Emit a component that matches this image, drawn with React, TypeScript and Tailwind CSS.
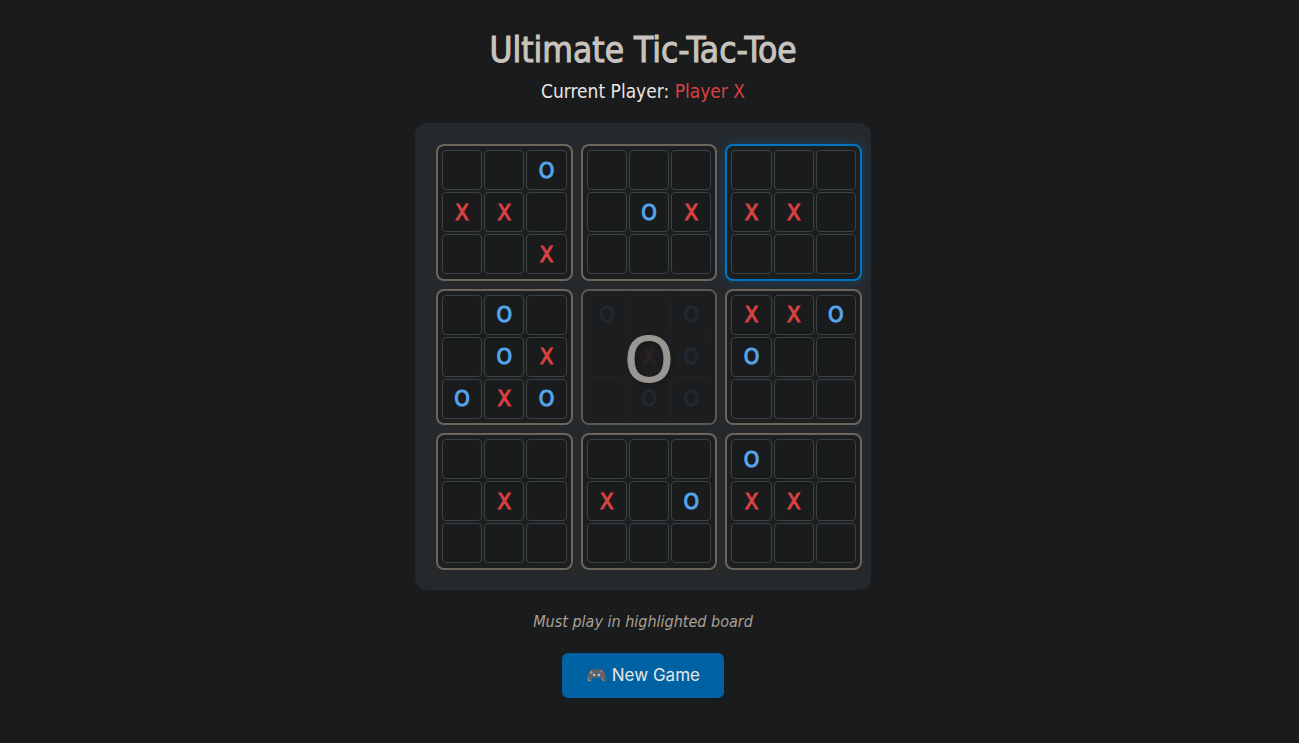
type Mark = "X" | "O" | " ";

interface Board {
  cells: string;
  winner?: Mark;
  active?: boolean;
}

const boards: Board[] = [
  { cells: "  OXX   X" },
  { cells: "    OX   " },
  { cells: "   XX    ", active: true },
  { cells: " O  OXOXO" },
  { cells: "O O XO OO", winner: "O" },
  { cells: "XXOO     " },
  { cells: "    X    " },
  { cells: "   X O   " },
  { cells: "O  XX    " },
];

const Cell = ({ mark, label }: { mark: string; label: string }) => (
  <button
    type="button"
    aria-label={label}
    className={`flex h-10 items-center justify-center rounded border border-[#3c4144] bg-[#1a1b1c] pt-px text-[22px] leading-6 [-webkit-text-stroke:1px_currentColor] ${
      mark === "X" ? "text-[#d94141]" : "text-[#54a6ec]"
    }`}
  >
    {mark.trim()}
  </button>
);

const SmallBoard = ({ board, index }: { board: Board; index: number }) => (
  <div
    className={`relative grid aspect-square grid-cols-3 content-start gap-0.5 rounded-lg border-2 bg-[#1b1f20] p-1 ${
      board.active
        ? "border-[#0074c4] shadow-[0_0_15px_rgba(0,116,196,0.3)]"
        : "border-[#6d655a]"
    } ${board.winner ? "opacity-80" : ""}`}
  >
    {board.cells.split("").map((mark, i) => (
      <Cell key={i} mark={mark} label={`Board ${index + 1}, cell ${i + 1} ${mark}`} />
    ))}
    {/* winner overlay */}
    {board.winner && (
      <div className="absolute inset-0 flex items-center justify-center rounded-md bg-[#1b1c1c]/90 pt-px font-['Noto_Sans',sans-serif] text-[64px] leading-none text-[#b8b3ac] [-webkit-text-stroke:1px_currentColor] [text-shadow:2px_2px_4px_rgba(0,0,0,0.3)]">
        {board.winner}
      </div>
    )}
  </div>
);

const App = () => {
  return (
    <div className="min-h-screen bg-[#1a1b1c] pt-7 pr-[13px] pb-11 font-['DejaVu_Sans_Condensed','DejaVu_Sans',sans-serif] text-[#e8e6e3]">
      <main className="mx-auto flex w-full max-w-[456px] flex-col items-center">
        <h1 className="text-[35px] leading-[44px] whitespace-nowrap text-[#c8c3bc] [-webkit-text-stroke:1px_currentColor]">
          Ultimate Tic-Tac-Toe
        </h1>
        <p className="mt-[3px] text-[19px] leading-8">
          Current Player: <span className="text-[#d94141]">Player X</span>
        </p>
        <div className="mt-4 w-full rounded-xl bg-[#25292c] pt-[21px] pr-[9px] pb-5 pl-[21px]">
          <div className="grid grid-cols-3 gap-2">
            {boards.map((board, i) => (
              <SmallBoard key={i} board={board} index={i} />
            ))}
          </div>
        </div>
        <p className="mt-5 text-base leading-6 text-[#a8a095] italic">
          Must play in highlighted board
        </p>
        <button
          type="button"
          className="mt-[19px] rounded-md bg-[#0062a3] px-6 py-[10px] font-[Inter,sans-serif] text-[17px] leading-[25px] text-[#e8e6e3]"
        >
          🎮 New Game
        </button>
      </main>
    </div>
  );
};

export default App;
